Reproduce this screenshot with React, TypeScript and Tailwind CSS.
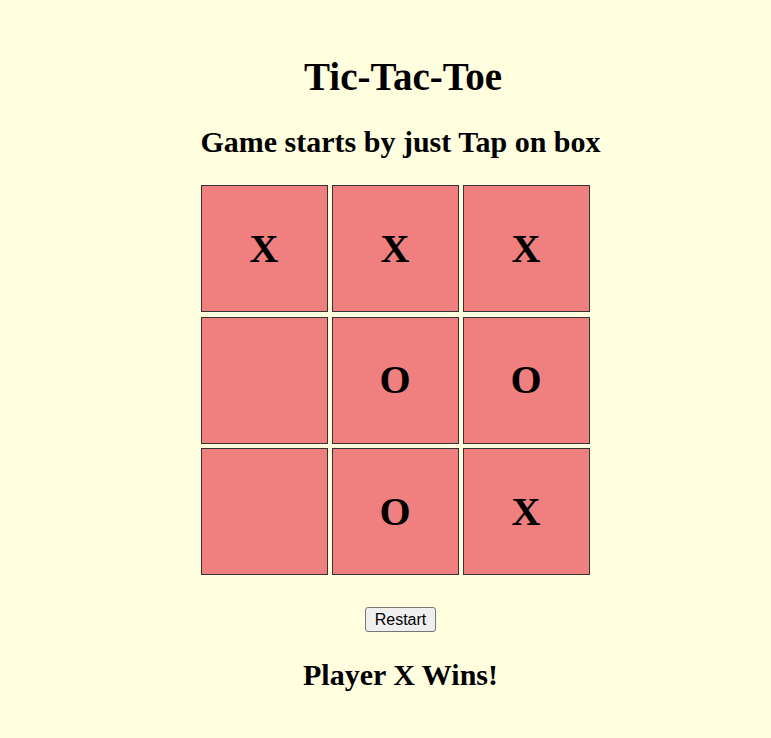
import React from "react";

const board = ["X", "X", "X", "", "O", "O", "", "O", "X"];

export default function App() {
  return (
    <div className="min-h-[738px] w-full bg-[#ffffe0] text-black" style={{ fontFamily: '"Liberation Serif", "Times New Roman", serif' }}>
      <div className="flex flex-col items-center pl-[30px] pt-[55px]">
        <h1 className="ml-[5px] text-[39px] font-bold leading-[44px]">Tic-Tac-Toe</h1>
        <h2 className="mt-[26px] text-[30px] font-bold leading-[34px]">Game starts by just Tap on box</h2>
        <div className="mr-[11px] mt-[26px] grid grid-cols-[127px_127px_127px] gap-x-[4px] gap-y-[4.6px]">
          {board.map((v, i) => (
            <div
              key={i}
              className="flex h-[127px] w-[127px] items-center justify-center border border-[#333] bg-[#f08080] text-[40px] font-bold"
            >
              {v}
            </div>
          ))}
        </div>
        <button
          className="mt-[32px] h-[25px] rounded-[3px] border border-[#767676] bg-[#efefef] px-[9px] text-[16px] leading-[20px]"
          style={{ fontFamily: '"Liberation Sans", Arial, sans-serif' }}
        >
          Restart
        </button>
        <h2 className="mt-[26px] text-[30px] font-bold leading-[34px]">Player X Wins!</h2>
      </div>
    </div>
  );
}
